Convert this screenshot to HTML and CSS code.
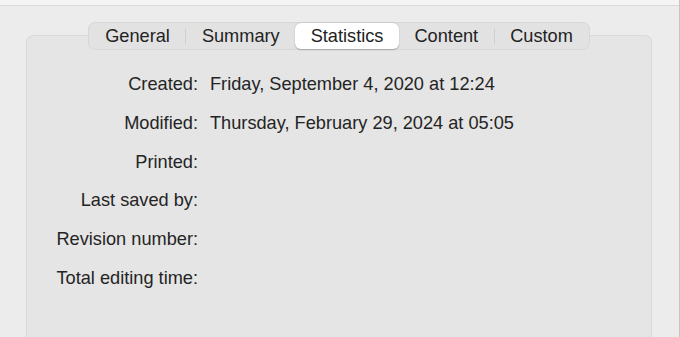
FILE: index.html
```html
<!DOCTYPE html>
<html>
<head>
<meta charset="utf-8">
<link rel="stylesheet" href="styles.css">
</head>
<body>
<div class="window">
  <div class="main">
    <div class="topbar"></div>
    <div class="content">
      <div class="tabs-row">
        <div class="tabs">
          <div class="tab">General</div>
          <div class="sep"></div>
          <div class="tab">Summary</div>
          <div class="tab selected">Statistics</div>
          <div class="tab">Content</div>
          <div class="sep"></div>
          <div class="tab">Custom</div>
        </div>
      </div>
      <div class="panel">
        <div class="grid">
          <div class="label">Created:</div><div class="value">Friday, September 4, 2020 at 12:24</div>
          <div class="label">Modified:</div><div class="value">Thursday, February 29, 2024 at 05:05</div>
          <div class="label">Printed:</div><div class="value"></div>
          <div class="label">Last saved by:</div><div class="value"></div>
          <div class="label">Revision number:</div><div class="value"></div>
          <div class="label">Total editing time:</div><div class="value"></div>
        </div>
      </div>
    </div>
  </div>
  <div class="edge"></div>
</div>
</body>
</html>
```
FILE: styles.css
```css
html, body {
  margin: 0;
  padding: 0;
  height: 100%;
  overflow: hidden;
}
body {
  background: #ececec;
  font-family: "Liberation Sans", Arial, sans-serif;
  color: #222222;
}
.window {
  display: flex;
  height: 337px;
}
.main {
  flex: 1;
  display: flex;
  flex-direction: column;
  min-width: 0;
}
.edge {
  width: 1px;
  background: #c6c6c6;
}
.topbar {
  flex-shrink: 0;
  height: 5px;
  background: #f4f4f4;
  border-bottom: 1px solid #d9d9d9;
}
.content {
  flex: 1;
  min-height: 0;
  padding: 16px 27px 0 26px;
  display: flex;
  flex-direction: column;
}
.tabs-row {
  flex-shrink: 0;
  display: flex;
  justify-content: center;
  margin-bottom: -15px;
  position: relative;
  z-index: 1;
}
.tabs {
  display: flex;
  align-items: center;
  height: 26px;
  padding: 0 1px;
  background: #e2e2e2;
  border: 1px solid #d7d7d7;
  border-radius: 7px;
}
.tab {
  height: 26px;
  line-height: 26px;
  font-size: 18.2px;
  padding: 0 15.5px;
  color: #222222;
  border-radius: 6px;
}
.tab.selected {
  background: #ffffff;
  box-shadow: 0 0.5px 1.5px rgba(0,0,0,0.25);
}
.sep {
  width: 1px;
  height: 15px;
  background: #cfcfcf;
}
.panel {
  flex: 1;
  min-height: 0;
  background: #e5e5e5;
  border: 1px solid #dadada;
  border-bottom: none;
  border-radius: 7px 7px 0 0;
  padding-top: 29px;
}
.grid {
  display: grid;
  grid-template-columns: 171px 1fr;
  column-gap: 12px;
  font-size: 18.2px;
  line-height: 38.8px;
}
.label {
  text-align: right;
  color: #242424;
}
.value {
  color: #242424;
  min-height: 38.8px;
}
```
